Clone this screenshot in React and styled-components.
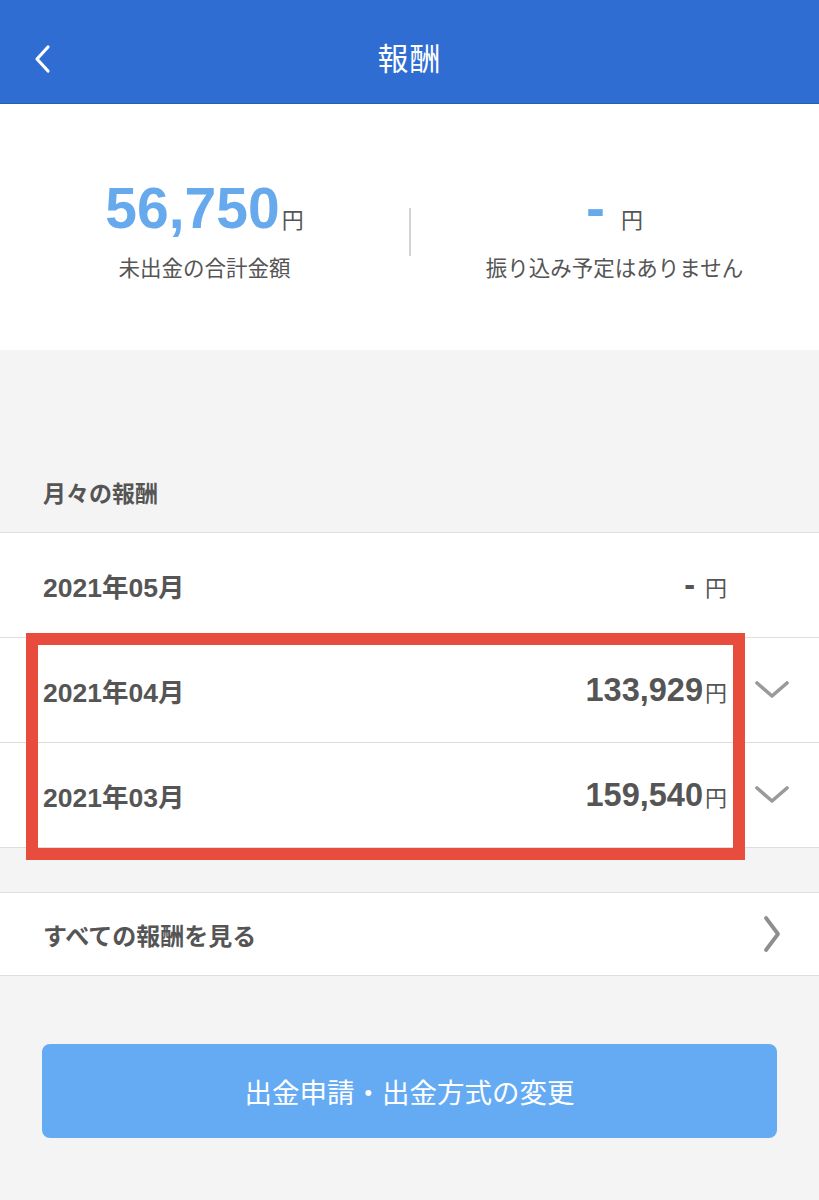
import styled, { createGlobalStyle } from 'styled-components';

const GlobalStyle = createGlobalStyle`
  html, body {
    margin: 0;
    padding: 0;
    background: #f4f4f4;
  }
  body {
    font-family: 'Liberation Sans', 'Noto Sans CJK JP', sans-serif;
    color: #555;
  }
  * {
    box-sizing: border-box;
  }
`;

// ヘッダー
const Header = styled.header`
  height: 104px;
  padding-top: 14px;
  background: #2f6dd2;
  border-bottom: 1px solid #2a5fb6;
  display: grid;
  grid-template-columns: 92px 1fr 92px;
  align-items: center;
`;

const BackButton = styled.button`
  border: none;
  background: none;
  padding: 0 0 0 33px;
  height: 100%;
  display: flex;
  align-items: center;
  cursor: pointer;
`;

const HeaderTitle = styled.h1`
  margin: 0 0 4px;
  text-align: center;
  color: #fff;
  font-size: 31px;
  font-weight: 400;
  letter-spacing: 1px;
`;

// 合計金額エリア
const Summary = styled.section`
  height: 246px;
  background: #fff;
  display: grid;
  grid-template-columns: 1fr 1px 1fr;
  align-items: center;
  padding-top: 6px;
`;

const SummaryCol = styled.div`
  display: flex;
  flex-direction: column;
  align-items: center;
  gap: 4px;
`;

const Divider = styled.div`
  width: 2px;
  height: 48px;
  background: #d4d4d4;
  margin-top: 4px;
`;

const BigAmount = styled.div`
  display: flex;
  align-items: baseline;
  color: #66aaed;
  font-size: 57px;
  font-weight: 700;
  line-height: 60px;
`;

const Yen = styled.span`
  font-size: ${(p) => p.$size || 22}px;
  font-weight: 400;
  color: #555;
  margin-left: ${(p) => p.$gap || 2}px;
`;

const SummaryLabel = styled.div`
  font-size: 21.5px;
  line-height: 28px;
  color: #555;
`;

// 月々の報酬
const SectionTitle = styled.div`
  height: 182px;
  display: flex;
  align-items: flex-end;
  padding: 0 0 23px 43px;
  font-size: 23px;
  font-weight: 700;
  color: #555;
`;

const List = styled.div`
  background: #fff;
  border-top: 1px solid #dedede;
`;

const Highlighted = styled.div`
  position: relative;
`;

const RedFrame = styled.div`
  position: absolute;
  left: 26px;
  top: -5px;
  width: 719px;
  height: 227px;
  border: 12px solid #e74c3c;
  pointer-events: none;
`;

const Row = styled.div`
  height: ${(p) => p.$height || 105}px;
  display: grid;
  grid-template-columns: 1fr 92px;
  align-items: center;
  padding-left: 43px;
  border-bottom: 1px solid #dedede;
  background: #fff;
`;

const RowLabel = styled.div`
  font-size: ${(p) => p.$size || 26.5}px;
  font-weight: 700;
  color: #555;
`;

const RowMain = styled.div`
  display: flex;
  justify-content: space-between;
  align-items: center;
`;

const RowAmount = styled.div`
  display: flex;
  align-items: baseline;
  font-size: 32.5px;
  font-weight: 700;
  color: #555;
`;

const IconCell = styled.div`
  display: flex;
  justify-content: center;
  align-items: center;
  padding-right: 2px;
`;

const Gap = styled.div`
  height: 45px;
  border-bottom: 1px solid #dedede;
`;

const ButtonArea = styled.div`
  padding: 68px 42px 62px;
`;

const PrimaryButton = styled.button`
  width: 100%;
  height: 94px;
  border: none;
  border-radius: 8px;
  background: #65abf4;
  color: #fff;
  font-family: inherit;
  font-size: 27.5px;
  font-weight: 400;
  cursor: pointer;
`;

const ChevronLeft = () => (
  <svg width="20" height="30" viewBox="0 0 20 30">
    <path d="M15 3 L4 15 L15 27" fill="none" stroke="#fff" strokeWidth="3.2" strokeLinecap="round" strokeLinejoin="round" />
  </svg>
);

const ChevronDown = () => (
  <svg width="36" height="22" viewBox="0 0 36 22">
    <path d="M3 4 L18 17 L33 4" fill="none" stroke="#9a9a9a" strokeWidth="3.6" strokeLinecap="round" strokeLinejoin="round" />
  </svg>
);

const ChevronRight = () => (
  <svg width="22" height="38" viewBox="0 0 22 38">
    <path d="M5 3 L17 19 L5 35" fill="none" stroke="#8e8e8e" strokeWidth="3.8" strokeLinecap="round" strokeLinejoin="round" />
  </svg>
);

const months = [
  { month: '2021年04月', amount: '133,929' },
  { month: '2021年03月', amount: '159,540' }
];

const App = () => {
  return (
    <>
      <GlobalStyle />
      <Header>
        <BackButton aria-label="戻る">
          <ChevronLeft />
        </BackButton>
        <HeaderTitle>報酬</HeaderTitle>
        <div />
      </Header>

      <Summary>
        <SummaryCol>
          <BigAmount>
            56,750<Yen>円</Yen>
          </BigAmount>
          <SummaryLabel>未出金の合計金額</SummaryLabel>
        </SummaryCol>
        <Divider />
        <SummaryCol>
          <BigAmount>
            -<Yen $gap={16}>円</Yen>
          </BigAmount>
          <SummaryLabel>振り込み予定はありません</SummaryLabel>
        </SummaryCol>
      </Summary>

      <SectionTitle>月々の報酬</SectionTitle>

      <List>
        <Row>
          <RowMain>
            <RowLabel>2021年05月</RowLabel>
            <RowAmount>
              -<Yen $gap={10}>円</Yen>
            </RowAmount>
          </RowMain>
          <IconCell />
        </Row>
        <Highlighted>
          {months.map((m) => (
            <Row key={m.month}>
              <RowMain>
                <RowLabel>{m.month}</RowLabel>
                <RowAmount>
                  {m.amount}
                  <Yen>円</Yen>
                </RowAmount>
              </RowMain>
              <IconCell>
                <ChevronDown />
              </IconCell>
            </Row>
          ))}
          <RedFrame />
        </Highlighted>
      </List>

      <Gap />

      <Row $height={83}>
        <RowLabel $size={24}>すべての報酬を見る</RowLabel>
        <IconCell>
          <ChevronRight />
        </IconCell>
      </Row>

      <ButtonArea>
        <PrimaryButton>出金申請・出金方式の変更</PrimaryButton>
      </ButtonArea>
    </>
  );
};

export default App;
